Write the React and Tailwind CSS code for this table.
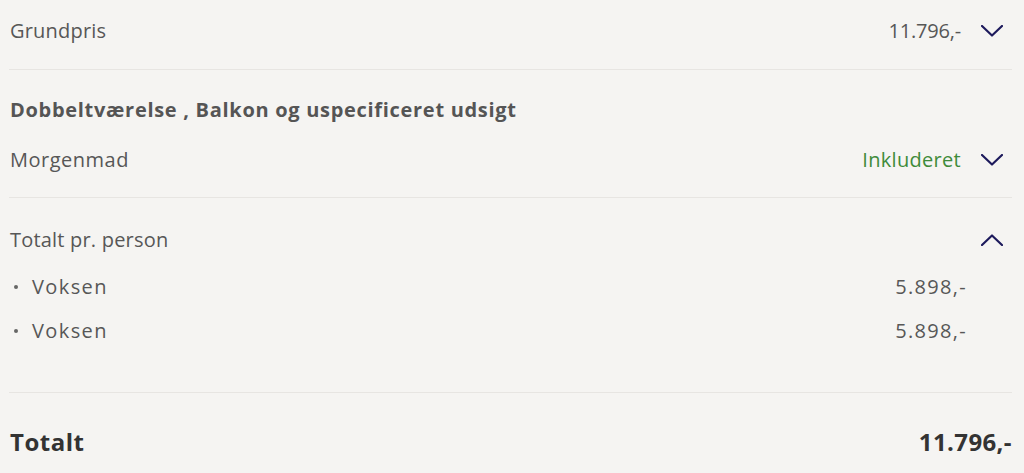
const font = { fontFamily: '"Open Sans", Lato, sans-serif' };

function Chevron({ up = false }) {
  return (
    <svg width="22" height="12" viewBox="0 0 22 12" fill="none" className="shrink-0">
      <path
        d={up ? 'M1 11 L11 1.5 L21 11' : 'M1 1 L11 10.5 L21 1'}
        stroke="#1d1a5c"
        strokeWidth="2.2"
        strokeLinecap="round"
        strokeLinejoin="round"
      />
    </svg>
  );
}

const persons = [
  { name: 'Voksen', price: '5.898,-' },
  { name: 'Voksen', price: '5.898,-' }
];

export default function App() {
  return (
    <div className="min-h-[473px] bg-[#f5f4f2] text-[#575757]" style={font}>
      <div className="ml-[9px] mr-[12px]">
        <div className="flex items-center justify-between h-[70px] pb-[8px] border-b border-[#e7e5e2]">
          <span className="text-[20px] leading-[28px] tracking-[0.2px] pl-[1px]">Grundpris</span>
          <div className="flex items-center gap-[20px] pr-[9px]">
            <span className="text-[20px] leading-[28px] tracking-[-0.2px]">11.796,-</span>
            <Chevron />
          </div>
        </div>

        <div className="h-[128px] border-b border-[#e7e5e2] pt-[26px]">
          <p className="text-[20px] leading-[28px] tracking-[0.7px] font-bold pl-[1px] text-[#555555]">Dobbeltværelse , Balkon og uspecificeret udsigt</p>
          <div className="flex items-center justify-between mt-[22px]">
            <span className="text-[20px] leading-[28px] tracking-[0.5px] pl-[1px]">Morgenmad</span>
            <div className="flex items-center gap-[20px] pr-[9px]">
              <span className="text-[20px] leading-[28px] tracking-[0.3px] text-[#3e8b3a]">Inkluderet</span>
              <Chevron />
            </div>
          </div>
        </div>

        <div className="h-[195px] border-b border-[#e7e5e2] pt-[28px]">
          <div className="flex items-center justify-between">
            <span className="text-[20px] leading-[28px] tracking-[0.2px] pl-[1px]">Totalt pr. person</span>
            <div className="pr-[9px]">
              <Chevron up />
            </div>
          </div>
          <div className="mt-[19px] flex flex-col gap-[16px]">
            {persons.map((p, i) => (
              <div key={i} className="flex items-center justify-between">
                <div className="flex items-center">
                  <span className="w-[4px] h-[4px] rounded-full bg-[#666] ml-[5px] mr-[14px]" />
                  <span className="text-[20px] leading-[28px] tracking-[1.4px]">{p.name}</span>
                </div>
                <span className="text-[20px] leading-[28px] tracking-[1.3px] pr-[45px]">{p.price}</span>
              </div>
            ))}
          </div>
        </div>

        <div className="flex items-center justify-between pt-[33px]">
          <span className="text-[24px] leading-[32px] tracking-[0.5px] font-bold text-[#333333] pl-[1px]">Totalt</span>
          <span className="text-[24px] leading-[32px] tracking-[0.4px] font-bold text-[#333333]">11.796,-</span>
        </div>
      </div>
    </div>
  );
}
